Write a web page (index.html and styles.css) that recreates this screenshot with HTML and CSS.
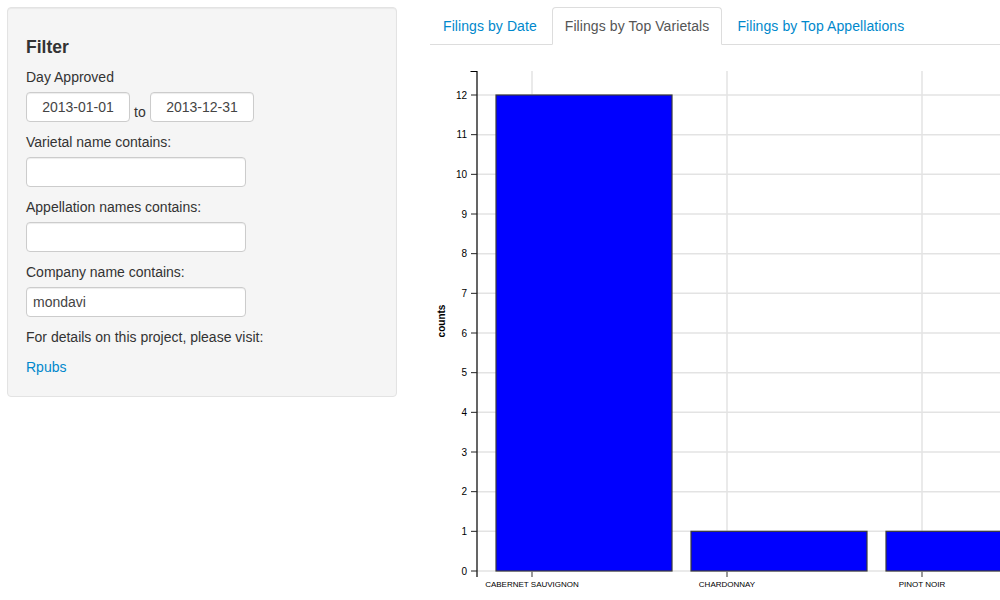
FILE: index.html
```html
<!DOCTYPE html>
<html>
<head>
<meta charset="utf-8">
<link rel="stylesheet" href="styles.css">
</head>
<body>
<div class="page">
  <div class="sidebar">
    <div class="well">
      <h4 class="title">Filter</h4>
      <div class="group">
        <label class="lbl">Day Approved</label>
        <div class="daterange">
          <input class="date" type="text" value="2013-01-01">
          <span class="to">to</span>
          <input class="date" type="text" value="2013-12-31">
        </div>
      </div>
      <div class="group">
        <label class="lbl">Varietal name contains:</label>
        <input class="txt" type="text" value="">
      </div>
      <div class="group">
        <label class="lbl">Appellation names contains:</label>
        <input class="txt" type="text" value="">
      </div>
      <div class="group">
        <label class="lbl">Company name contains:</label>
        <input class="txt" type="text" value="mondavi">
      </div>
      <p class="note">For details on this project, please visit:</p>
      <p class="linkp"><a class="link" href="#">Rpubs</a></p>
    </div>
  </div>
  <div class="main">
    <ul class="tabs">
      <li class="tab"><a href="#">Filings by Date</a></li>
      <li class="tab active"><a href="#">Filings by Top Varietals</a></li>
      <li class="tab"><a href="#">Filings by Top Appellations</a></li>
    </ul>
    <div class="chart">
      <svg width="570" height="555" viewBox="430 45 570 555" xmlns="http://www.w3.org/2000/svg">
        <g stroke="#e3e3e3" stroke-width="1.5">
          <line x1="477" x2="1000" y1="571" y2="571"/>
          <line x1="477" x2="1000" y1="531.33" y2="531.33"/>
          <line x1="477" x2="1000" y1="491.67" y2="491.67"/>
          <line x1="477" x2="1000" y1="452" y2="452"/>
          <line x1="477" x2="1000" y1="412.33" y2="412.33"/>
          <line x1="477" x2="1000" y1="372.67" y2="372.67"/>
          <line x1="477" x2="1000" y1="333" y2="333"/>
          <line x1="477" x2="1000" y1="293.33" y2="293.33"/>
          <line x1="477" x2="1000" y1="253.67" y2="253.67"/>
          <line x1="477" x2="1000" y1="214" y2="214"/>
          <line x1="477" x2="1000" y1="174.33" y2="174.33"/>
          <line x1="477" x2="1000" y1="134.67" y2="134.67"/>
          <line x1="477" x2="1000" y1="95" y2="95"/>
          <line x1="532" x2="532" y1="71" y2="571"/>
          <line x1="727" x2="727" y1="71" y2="571"/>
          <line x1="922" x2="922" y1="71" y2="571"/>
        </g>
        <g fill="#0000ff" stroke="#3a3a3a" stroke-width="1.2">
          <rect x="496" y="95" width="176" height="476"/>
          <rect x="691" y="531.33" width="176" height="39.67"/>
          <rect x="886" y="531.33" width="176" height="39.67"/>
        </g>
        <path d="M470.5,71.5H477V571" fill="none" stroke="#000" stroke-width="1.2"/>
        <line x1="477" x2="477" y1="571" y2="577" stroke="#000" stroke-width="1.2"/>
        <g stroke="#222" stroke-width="1">
          <line x1="471" x2="477" y1="571" y2="571"/>
          <line x1="471" x2="477" y1="531.33" y2="531.33"/>
          <line x1="471" x2="477" y1="491.67" y2="491.67"/>
          <line x1="471" x2="477" y1="452" y2="452"/>
          <line x1="471" x2="477" y1="412.33" y2="412.33"/>
          <line x1="471" x2="477" y1="372.67" y2="372.67"/>
          <line x1="471" x2="477" y1="333" y2="333"/>
          <line x1="471" x2="477" y1="293.33" y2="293.33"/>
          <line x1="471" x2="477" y1="253.67" y2="253.67"/>
          <line x1="471" x2="477" y1="214" y2="214"/>
          <line x1="471" x2="477" y1="174.33" y2="174.33"/>
          <line x1="471" x2="477" y1="134.67" y2="134.67"/>
          <line x1="471" x2="477" y1="95" y2="95"/>
        </g>
        <g stroke="#777" stroke-width="1.5">
          <line x1="532" x2="532" y1="571" y2="577"/>
          <line x1="727" x2="727" y1="571" y2="577"/>
          <line x1="922" x2="922" y1="571" y2="577"/>
        </g>
        <g class="ylab" text-anchor="end">
          <text x="467" y="574.5">0</text>
          <text x="467" y="534.8">1</text>
          <text x="467" y="495.2">2</text>
          <text x="467" y="455.5">3</text>
          <text x="467" y="415.8">4</text>
          <text x="467" y="376.2">5</text>
          <text x="467" y="336.5">6</text>
          <text x="467" y="296.8">7</text>
          <text x="467" y="257.2">8</text>
          <text x="467" y="217.5">9</text>
          <text x="467" y="177.8">10</text>
          <text x="467" y="138.2">11</text>
          <text x="467" y="98.5">12</text>
        </g>
        <g class="xlab" text-anchor="middle">
          <text x="532" y="587">CABERNET SAUVIGNON</text>
          <text x="727" y="587">CHARDONNAY</text>
          <text x="922" y="587">PINOT NOIR</text>
        </g>
        <text class="ytitle" x="0" y="0" text-anchor="middle" transform="translate(445,321) rotate(-90)">counts</text>
      </svg>
    </div>
  </div>
</div>
</body>
</html>
```

FILE: styles.css
```css
html, body {
  margin: 0;
  padding: 0;
  background: #fff;
}
body {
  font-family: "Liberation Sans", Arial, sans-serif;
  font-size: 14px;
  line-height: 20px;
  color: #333;
}
.page {
  display: flex;
  align-items: flex-start;
  padding: 7px 0 0 7px;
  gap: 33px;
  width: 993px;
  height: 593px;
  overflow: hidden;
}
.sidebar {
  width: 390px;
  flex: 0 0 390px;
}
.well {
  background: #f5f5f5;
  border: 1px solid #e3e3e3;
  border-radius: 4px;
  padding: 19px 19px 19px 18px;
  box-shadow: inset 0 1px 1px rgba(0,0,0,0.05);
}
.title {
  margin: 10px 0 10px 0;
  font-size: 17.5px;
  line-height: 20px;
  font-weight: bold;
  color: #333;
}
.group {
  margin: 0;
}
.lbl {
  display: block;
  margin-bottom: 5px;
  font-size: 14px;
  line-height: 20px;
  color: #333;
}
.daterange {
  display: flex;
  align-items: flex-end;
  margin-bottom: 10px;
}
.date, .txt {
  box-sizing: border-box;
  height: 30px;
  padding: 4px 6px;
  border: 1px solid #ccc;
  border-radius: 4px;
  background: #fff;
  font-family: "Liberation Sans", Arial, sans-serif;
  font-size: 14px;
  line-height: 20px;
  color: #444;
  box-shadow: inset 0 1px 1px rgba(0,0,0,0.075);
  margin: 0;
}
.date {
  width: 104px;
  text-align: center;
}
.to {
  display: block;
  width: 20px;
  text-indent: 4px;
  line-height: 20px;
  margin-bottom: 0;
}
.txt {
  display: block;
  width: 220px;
  margin-bottom: 10px;
}
.note {
  margin: 0 0 10px 0;
}
.linkp {
  margin: 0;
}
.link {
  color: #0088cc;
  text-decoration: none;
}
.main {
  flex: 1;
  min-width: 0;
  overflow: hidden;
}
.tabs {
  list-style: none;
  margin: 0;
  padding: 0;
  display: flex;
  border-bottom: 1px solid #ddd;
  height: 37px;
}
.tab {
  margin: 0 2px -1px 0;
}
.tab a {
  display: block;
  padding: 8px 12px;
  line-height: 20px;
  border: 1px solid transparent;
  border-radius: 4px 4px 0 0;
  color: #0088cc;
  text-decoration: none;
  letter-spacing: 0.08px;
}
.tab.active a {
  color: #555;
  background: #fff;
  border-color: #ddd;
  border-bottom-color: transparent;
}
.chart {
  height: 555px;
}
.chart svg {
  display: block;
}
.ylab text {
  font-family: "Liberation Sans", Arial, sans-serif;
  font-size: 10px;
  fill: #000;
}
.xlab text {
  font-family: "Liberation Sans", Arial, sans-serif;
  font-size: 8px;
  fill: #000;
}
.ytitle {
  font-family: "Liberation Sans", Arial, sans-serif;
  font-size: 10px;
  font-weight: bold;
  fill: #000;
}
```
